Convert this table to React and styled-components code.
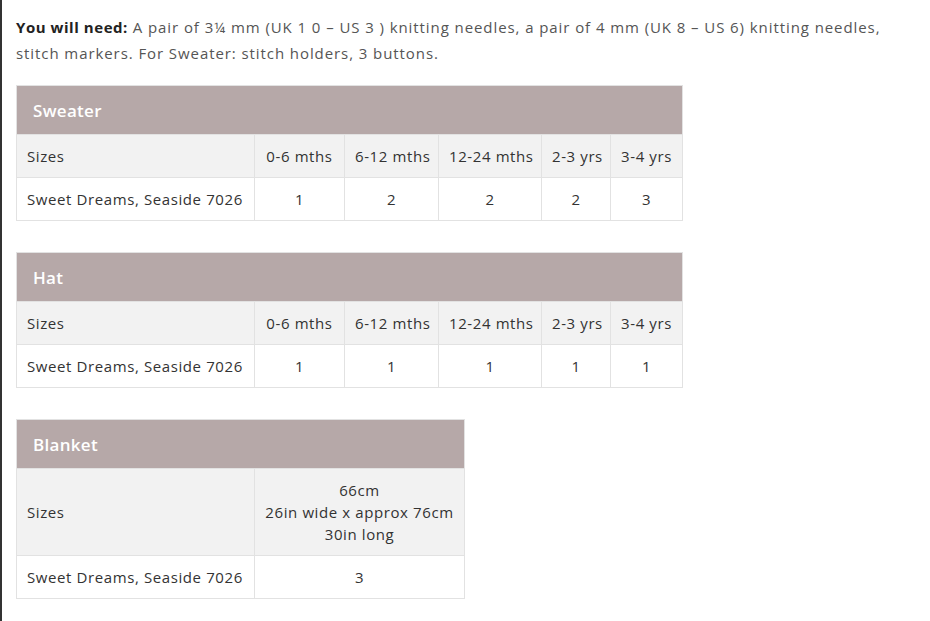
import React from "react";
import styled, { createGlobalStyle } from "styled-components";

const Global = createGlobalStyle`
  html, body { margin: 0; padding: 0; background: #fff; }
  body { font-family: "Open Sans", "Liberation Sans", sans-serif; }
`;

const Page = styled.div`
  min-height: 621px;
  box-sizing: border-box;
  border-left: 2px solid #333;
  padding: 14px 0 0 14px;
`;

const Intro = styled.p`
  margin: 0 0 19px;
  width: 885px;
  font-size: 15px;
  line-height: 26px;
  color: #555;
  letter-spacing: 0.92px;
  b { color: #222; font-weight: 700; letter-spacing: 0.55px; }
`;

const Table = styled.table`
  border-collapse: collapse;
  table-layout: fixed;
  width: ${(p) => p.$width}px;
  margin-bottom: 31px;
  font-size: 15px;
  letter-spacing: 0.6px;
  color: #333;
`;

const Head = styled.th`
  background: #b6a8a8;
  color: #fff;
  font-size: 17px;
  font-weight: 600;
  letter-spacing: 0.3px;
  text-align: left;
  height: 49px;
  padding: 0 16px;
  border: 1px solid #e2e2e2;
  box-sizing: border-box;
`;

const Row = styled.tr`
  background: ${(p) => (p.$shaded ? "#f2f2f2" : "#fff")};
`;

const Cell = styled.td`
  border: 1px solid #e2e2e2;
  padding: 10px 10px;
  height: 43px;
  box-sizing: border-box;
  line-height: 22px;
  text-align: ${(p) => (p.$left ? "left" : "center")};
  white-space: nowrap;
`;

const sizes = ["0-6 mths", "6-12 mths", "12-24 mths", "2-3 yrs", "3-4 yrs"];
const widths = [238, 90, 94, 103, 69, 72];

function SizeTable({ title, counts }) {
  return (
    <Table $width={666}>
      <colgroup>
        {widths.map((w, i) => (
          <col key={i} style={{ width: w }} />
        ))}
      </colgroup>
      <thead>
        <tr>
          <Head colSpan={6}>{title}</Head>
        </tr>
      </thead>
      <tbody>
        <Row $shaded>
          <Cell $left>Sizes</Cell>
          {sizes.map((s) => (
            <Cell key={s}>{s}</Cell>
          ))}
        </Row>
        <Row>
          <Cell $left>Sweet Dreams, Seaside 7026</Cell>
          {counts.map((c, i) => (
            <Cell key={i}>{c}</Cell>
          ))}
        </Row>
      </tbody>
    </Table>
  );
}

export default function App() {
  return (
    <>
      <Global />
      <Page>
        <Intro>
          <b>You will need:</b> A pair of 3¼ mm (UK 1 0 – US 3 ) knitting needles, a pair of 4 mm (UK 8 – US 6) knitting needles, stitch markers. For Sweater: stitch holders, 3 buttons.
        </Intro>
        <SizeTable title="Sweater" counts={[1, 2, 2, 2, 3]} />
        <SizeTable title="Hat" counts={[1, 1, 1, 1, 1]} />
        <Table $width={448}>
          <colgroup>
            <col style={{ width: 238 }} />
            <col style={{ width: 210 }} />
          </colgroup>
          <thead>
            <tr>
              <Head colSpan={2}>Blanket</Head>
            </tr>
          </thead>
          <tbody>
            <Row $shaded>
              <Cell $left>Sizes</Cell>
              <Cell>
                66cm
                <br />
                26in wide x approx 76cm
                <br />
                30in long
              </Cell>
            </Row>
            <Row>
              <Cell $left>Sweet Dreams, Seaside 7026</Cell>
              <Cell>3</Cell>
            </Row>
          </tbody>
        </Table>
      </Page>
    </>
  );
}
